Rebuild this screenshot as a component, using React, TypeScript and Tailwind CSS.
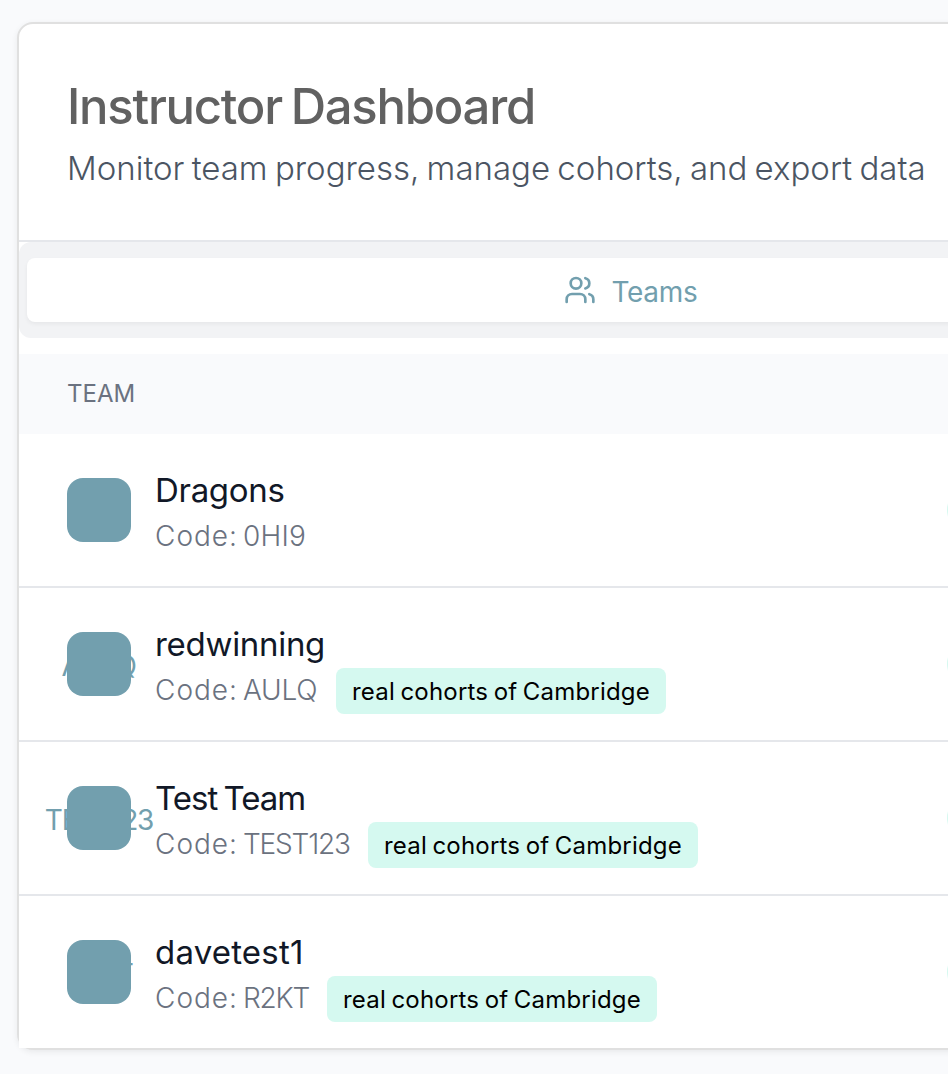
import { Users } from "lucide-react";

type Team = {
  name: string;
  nameClass: string;
  code: string;
  lineClass: string;
  codeClass: string;
  badge?: string;
};

const teams: Team[] = [
  { name: "Dragons", nameClass: "tracking-[-0.3px]", code: "0HI9", lineClass: "w-[153px]", codeClass: "tracking-[0.2px]" },
  { name: "redwinning", nameClass: "tracking-[-0.3px]", code: "AULQ", lineClass: "w-[165px]", codeClass: "tracking-[-0.2px]", badge: "real cohorts of Cambridge" },
  { name: "Test Team", nameClass: "tracking-[-1px] [word-spacing:-2px]", code: "TEST123", lineClass: "w-[197px]", codeClass: "tracking-[-1.2px]", badge: "real cohorts of Cambridge" },
  { name: "davetest1", nameClass: "tracking-[0.2px]", code: "R2KT", lineClass: "w-[156px]", codeClass: "tracking-[-1.2px]", badge: "real cohorts of Cambridge" },
];

function TeamRow({ team }: { team: Team }) {
  return (
    <div className="flex h-[154px] border-b-2 border-[#e5e7eb] bg-white pl-12 last:h-[152px] last:border-b-0">
      <div className="flex w-[880px] shrink-0 items-start pt-11">
        <div className="relative flex size-16 shrink-0 items-center justify-center">
          <span className={`absolute mt-1 whitespace-nowrap text-[28px] leading-10 text-[#729fae] ${team.codeClass}`}>
            {team.badge ? team.code : ""}
          </span>
          <div className="relative size-16 rounded-2xl bg-[#729fae]" />
        </div>
        <div className="-mt-3 ml-6 flex flex-col">
          <div className={`h-12 whitespace-nowrap text-[33px] leading-[48px] text-[#111827] ${team.nameClass}`}>
            {team.name}
          </div>
          <div className="flex h-[46px] items-center">
            <div className={`flex shrink-0 whitespace-nowrap pb-0.5 text-[28px] font-light leading-10 text-[#6b7280] ${team.lineClass}`}>
              <span className="w-[88px] tracking-[1px]">Code:</span>
              <span className={team.codeClass}>{team.code}</span>
            </div>
            {team.badge && (
              <span className="ml-4 flex h-[46px] w-[330px] items-center whitespace-nowrap rounded-lg bg-[#d5f9f0] pl-4 pt-0.5 text-[24px] tracking-[0.2px] text-black [word-spacing:-1.5px]">
                {team.badge}
              </span>
            )}
          </div>
        </div>
      </div>
      <div className="flex items-center">
        <span className="h-[46px] w-24 rounded-full bg-[#d5f9f0]" />
      </div>
    </div>
  );
}

export default function App() {
  return (
    <div className="h-[1074px] w-full overflow-hidden bg-[#f9fafc] pl-[17px] pt-[22px] font-['Inter','Noto_Sans',sans-serif]">
      <main className="h-[1028px] w-[1228px] rounded-2xl border-2 border-[#e0e0e0] bg-white shadow-[0_2px_6px_rgba(0,0,0,0.07)]">
        <header className="h-[218px] border-b-2 border-[#e5e7eb] pl-12 pt-[53px]">
          <h1 className="whitespace-nowrap text-[49px] font-medium leading-[60px] tracking-[-1.25px] text-[#616161] [word-spacing:-3px]">
            Instructor Dashboard
          </h1>
          <p className="mt-[7px] whitespace-nowrap text-[33px] font-light leading-[48px] text-[#4b5563] [word-spacing:-2px]">
            Monitor team progress, manage cohorts, and export data
          </p>
        </header>
        <div className="h-24 rounded-xl bg-[#f2f3f5] px-2 py-4">
          <button className="flex h-16 w-[1208px] items-center justify-center gap-[15px] rounded-lg bg-white text-[28px] text-[#729fae] shadow-[0_2px_4px_rgba(0,0,0,0.05)]">
            <Users className="size-8" strokeWidth={2} />
            <span className="pt-[3px] tracking-[-0.3px]">Teams</span>
          </button>
        </div>
        <div className="mt-4 flex h-20 items-center bg-[#f9fafc] pl-12 text-[24px] text-[#6b7280]">
          TEAM
        </div>
        {teams.map((team) => (
          <TeamRow key={team.name} team={team} />
        ))}
      </main>
    </div>
  );
}
